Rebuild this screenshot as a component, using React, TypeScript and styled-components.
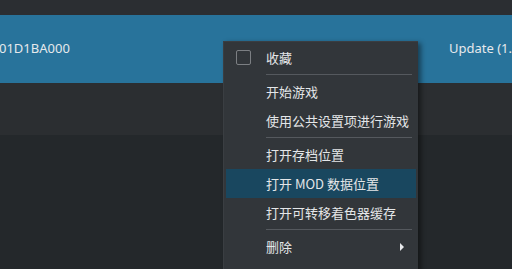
import * as React from "react";
import styled, { createGlobalStyle } from "styled-components";

const GlobalStyle = createGlobalStyle`
  html, body {
    margin: 0;
    padding: 0;
    background: #24282b;
    overflow: hidden;
  }
  body {
    font-family: "Noto Sans", "Noto Sans CJK SC", sans-serif;
    font-size: 13px;
    color: #e2e4e6;
  }
`;

type MenuEntry =
  | { kind: "item"; label: string; checkbox?: boolean; active?: boolean; submenu?: boolean }
  | { kind: "separator" };

const entries: MenuEntry[] = [
  { kind: "item", label: "收藏", checkbox: true },
  { kind: "separator" },
  { kind: "item", label: "开始游戏" },
  { kind: "item", label: "使用公共设置项进行游戏" },
  { kind: "separator" },
  { kind: "item", label: "打开存档位置" },
  { kind: "item", label: "打开 MOD 数据位置", active: true },
  { kind: "item", label: "打开可转移着色器缓存" },
  { kind: "separator" },
  { kind: "item", label: "删除", submenu: true },
];

export default function App() {
  return (
    <Page>
      <GlobalStyle />
      <TopBar />
      <GameRow>
        <IdCell>01D1BA000</IdCell>
        <VersionCell>Update (1.1.0)</VersionCell>
      </GameRow>
      <EmptyRow />
      <Rest />
      <Menu>
        {entries.map((entry, i) =>
          entry.kind === "separator" ? (
            <Separator key={i} />
          ) : (
            <Item key={i} $active={entry.active}>
              <CheckSlot>{entry.checkbox && <Checkbox />}</CheckSlot>
              <Label>{entry.label}</Label>
              {entry.submenu && <Arrow />}
            </Item>
          )
        )}
      </Menu>
    </Page>
  );
}

const Page = styled.div`
  position: relative;
  width: 512px;
  height: 269px;
  display: flex;
  flex-direction: column;
  overflow: hidden;
`;

const TopBar = styled.div`
  height: 15px;
  background: #2b2e32;
`;

const GameRow = styled.div`
  height: 68px;
  background: #28739b;
  display: flex;
  white-space: nowrap;
  overflow: hidden;
`;

const IdCell = styled.div`
  flex-shrink: 0;
  align-self: center;
  margin-left: -1px;
  width: 450px;
  padding-bottom: 3px;
  color: #e6e9ec;
`;

const VersionCell = styled.div`
  flex-shrink: 0;
  padding-top: 24px;
  color: #e6e9ec;
`;

const EmptyRow = styled.div`
  height: 52px;
  background: #2b2e31;
`;

const Rest = styled.div`
  flex: 1;
  background: #24282b;
`;

const Menu = styled.div`
  position: absolute;
  left: 223px;
  top: 41px;
  width: 190px;
  padding: 1px 2px 10px 2px;
  background: #32363a;
  border-left: 1px solid #3a3e42;
  border-top: 1px solid #3a3e42;
  box-shadow: 3px 2px 5px rgba(0, 0, 0, 0.45);
  display: flex;
  flex-direction: column;
`;

const Item = styled.div<{ $active?: boolean }>`
  position: relative;
  height: 29px;
  display: flex;
  align-items: center;
  background: ${(p) => (p.$active ? "#19475f" : "transparent")};
`;

const CheckSlot = styled.div`
  width: 40px;
  display: flex;
  align-items: center;
  padding-left: 10px;
  box-sizing: border-box;
`;

const Checkbox = styled.div`
  width: 13px;
  height: 13px;
  border: 1px solid #7c7f83;
  border-radius: 2px;
`;

const Label = styled.span`
  flex: 1;
  font-family: "Noto Sans CJK SC", "Noto Sans", sans-serif;
  font-size: 13px;
  color: #e4e6e8;
`;

const Arrow = styled.span`
  width: 0;
  height: 0;
  margin-right: 12px;
  border-top: 4px solid transparent;
  border-bottom: 4px solid transparent;
  border-left: 4px solid #e8eaec;
`;

const Separator = styled.div`
  height: 5px;
  display: flex;
  align-items: center;
  padding-left: 40px;
  padding-right: 4px;

  &::after {
    content: "";
    flex: 1;
    height: 1px;
    background: #55595e;
  }
`;
